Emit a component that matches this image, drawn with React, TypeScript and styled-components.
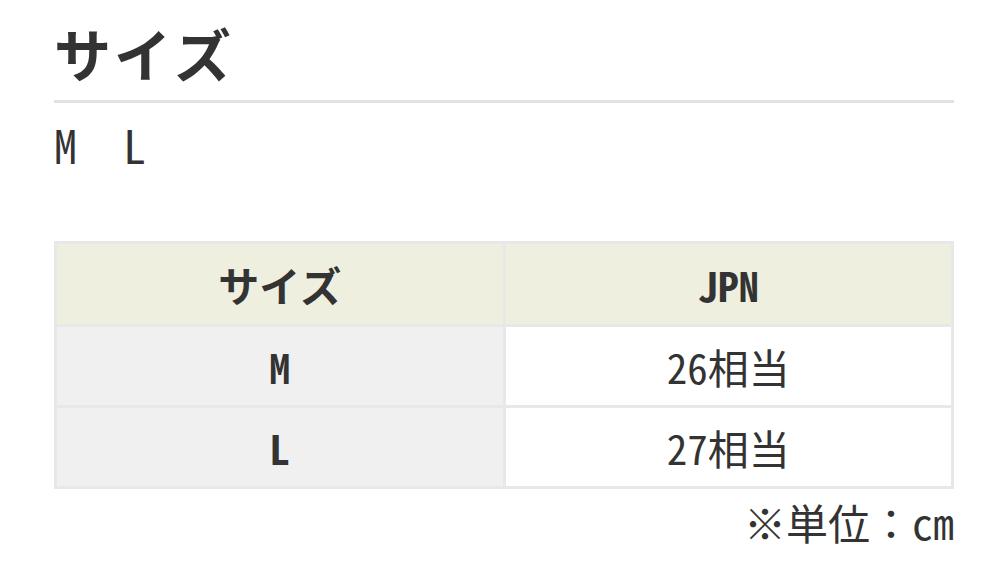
import React from 'react';
import styled, { createGlobalStyle } from 'styled-components';

const GlobalStyle = createGlobalStyle`
  html, body {
    margin: 0;
    padding: 0;
    background: #ffffff;
  }
  body {
    font-family: "Noto Sans Mono CJK JP", "Noto Sans CJK JP", sans-serif;
    color: #333333;
  }
`;

const Page = styled.div`
  width: 900px;
  padding: 16px 0 0 54px;
`;

const Heading = styled.h2`
  margin: 0;
  font-size: 57px;
  font-weight: 700;
  line-height: 72px;
  letter-spacing: 3px;
  padding-bottom: 12px;
  border-bottom: 3px solid #e2e2e2;
`;

const SizeList = styled.p`
  margin: 14px 0 0;
  font-size: 46px;
  line-height: 54px;
  font-weight: 400;
`;

const SizeTable = styled.table`
  width: 900px;
  margin-top: 70px;
  border-collapse: collapse;
  table-layout: fixed;
  border: 3px solid #e8e8e8;
`;

const Cell = styled.td<{ $kind: 'head' | 'label' | 'value' }>`
  border: 3px solid #e8e8e8;
  height: ${p => (p.$kind === 'head' ? '80px' : '78px')};
  padding: 0;
  text-align: center;
  vertical-align: middle;
  font-size: 41px;
  font-weight: ${p => (p.$kind === 'value' ? 400 : 700)};
  background: ${p =>
    p.$kind === 'head' ? '#efefe0' : p.$kind === 'label' ? '#f0f0f0' : '#ffffff'};
`;

const Note = styled.p`
  margin: 6px 0 0;
  text-align: right;
  font-size: 42px;
  line-height: 54px;
`;

const rows = [
  { size: 'M', jpn: '26相当' },
  { size: 'L', jpn: '27相当' },
];

export default function App() {
  return (
    <>
      <GlobalStyle />
      <Page>
        <Heading>サイズ</Heading>
        <SizeList>M　L</SizeList>
        <SizeTable>
          <tbody>
            <tr>
              <Cell as="th" $kind="head">サイズ</Cell>
              <Cell as="th" $kind="head">JPN</Cell>
            </tr>
            {rows.map(r => (
              <tr key={r.size}>
                <Cell $kind="label">{r.size}</Cell>
                <Cell $kind="value">{r.jpn}</Cell>
              </tr>
            ))}
          </tbody>
        </SizeTable>
        <Note>※単位：cm</Note>
      </Page>
    </>
  );
}
